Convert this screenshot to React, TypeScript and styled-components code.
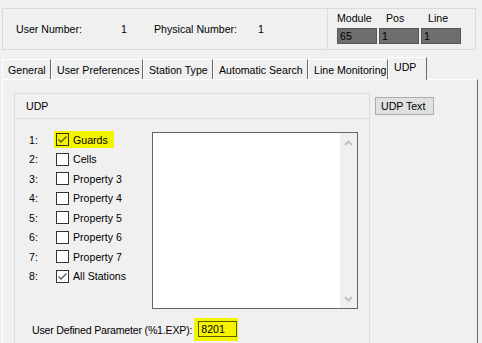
import React from 'react';
import styled, { createGlobalStyle } from 'styled-components';

const GlobalStyle = createGlobalStyle`
  html, body {
    margin: 0;
    padding: 0;
    background: #f0f0f0;
  }
  body {
    font-family: "Liberation Sans", Arial, sans-serif;
    font-size: 10.6px;
    color: #000;
  }
`;

const HIGHLIGHT = '#f4f400';

const Screen = styled.div`
  width: 482px;
  height: 343px;
  box-sizing: border-box;
  padding: 8px 0 0 2px;
  display: flex;
  flex-direction: column;
  overflow: hidden;
`;

const HeaderBar = styled.div`
  display: flex;
  height: 42px;
  flex: none;
`;

const InfoPanel = styled.div`
  width: 326px;
  box-sizing: border-box;
  border: 1px solid #dadada;
  display: flex;
  align-items: center;
  padding: 1px 0 0 13px;
`;

const InfoText = styled.span<{ $width?: number }>`
  flex: none;
  width: ${({ $width }) => ($width ? `${$width}px` : 'auto')};
  line-height: 13px;
  white-space: nowrap;
`;

const LocationPanel = styled.div`
  width: 148px;
  box-sizing: border-box;
  border: 1px solid #dadada;
  border-left: none;
  padding: 3px 0 0 9px;
  display: grid;
  grid-template-columns: repeat(3, 40px);
  grid-template-rows: 13px 16px;
  column-gap: 2px;
  row-gap: 3px;
`;

const LocationLabel = styled.span<{ $indent: number }>`
  padding-left: ${({ $indent }) => $indent}px;
  line-height: 13px;
`;

const ValueBox = styled.div`
  box-sizing: border-box;
  height: 16px;
  background: #6e6e6e;
  border: 1px solid #565656;
  padding-left: 2px;
  line-height: 14px;
`;

const TabStrip = styled.div`
  display: flex;
  align-items: flex-end;
  height: 22px;
  margin-top: 7px;
  flex: none;
`;

const Tab = styled.div<{ $width: number; $active?: boolean }>`
  position: relative;
  z-index: ${({ $active }) => ($active ? 1 : 0)};
  box-sizing: border-box;
  width: ${({ $width }) => $width}px;
  height: ${({ $active }) => ($active ? 23 : 20)}px;
  margin-bottom: ${({ $active }) => ($active ? -1 : 0)}px;
  border-top: 1px solid #fff;
  border-left: 1px solid #fff;
  border-right: 1px solid #696969;
  background: #f0f0f0;
  padding: ${({ $active }) => ($active ? '3px 0 0 5px' : '4px 0 0 5px')};
  line-height: 13px;
  white-space: nowrap;
  overflow: hidden;
`;

const TabPage = styled.div`
  flex: 1;
  width: 476px;
  box-sizing: border-box;
  border-top: 1px solid #fff;
  border-left: 1px solid #fff;
  border-right: 1px solid #696969;
  padding: 13px 0 0 11px;
  display: flex;
  align-items: flex-start;
  gap: 5px;
`;

const GroupBox = styled.div`
  width: 356px;
  height: 280px;
  box-sizing: border-box;
  border: 1px solid #dcdcdc;
  flex: none;
`;

const GroupHeader = styled.div`
  height: 24px;
  border-bottom: 1px solid #dcdcdc;
  padding-left: 11px;
  display: flex;
  align-items: center;
`;

const GroupBody = styled.div`
  display: flex;
  padding-top: 11px;
`;

const OptionList = styled.div`
  width: 123px;
  padding-left: 14px;
  display: grid;
  grid-auto-rows: 19.5px;
`;

const OptionRow = styled.div`
  display: flex;
  align-items: center;
  white-space: nowrap;
`;

const OptionNumber = styled.span`
  width: 27px;
  flex: none;
`;

const OptionBody = styled.span<{ $highlight?: boolean }>`
  display: inline-flex;
  align-items: center;
  gap: 4px;
  ${({ $highlight }) =>
    $highlight
      ? `
    background: ${HIGHLIGHT};
    margin-left: -2px;
    padding: 2px 6px 2px 2px;
  `
      : ''}
`;

const CheckBox = styled.span<{ $tint?: boolean }>`
  width: 13px;
  height: 13px;
  box-sizing: border-box;
  border: 1px solid ${({ $tint }) => ($tint ? '#333300' : '#333')};
  background: ${({ $tint }) => ($tint ? 'transparent' : '#fff')};
  display: inline-flex;
  align-items: center;
  justify-content: center;
  flex: none;
`;

const ListBox = styled.div`
  margin-top: 2px;
  width: 206px;
  height: 177px;
  box-sizing: border-box;
  border: 1px solid #646464;
  background: #fff;
  display: flex;
  justify-content: flex-end;
`;

const ScrollTrack = styled.div`
  width: 17px;
  background: #f0f0f0;
  display: flex;
  flex-direction: column;
  justify-content: space-between;
  align-items: center;
  padding: 7px 0 6px;
`;

const ParamRow = styled.div`
  display: flex;
  align-items: center;
  margin-top: 9px;
  padding-left: 17px;
`;

const ParamLabel = styled.span`
  margin-right: 2px;
  flex: none;
  white-space: nowrap;
  letter-spacing: -0.2px;
`;

const ParamHighlight = styled.span`
  background: ${HIGHLIGHT};
  padding: 3px 1px 4px 4px;
  display: inline-flex;
`;

const ParamInput = styled.span`
  width: 39px;
  height: 16px;
  box-sizing: border-box;
  border: 1px solid #5a5a00;
  padding-left: 2px;
  line-height: 14px;
`;

const SideButton = styled.div`
  margin-top: 4px;
  width: 59px;
  height: 18px;
  box-sizing: border-box;
  border: 1px solid #adadad;
  background: #e1e1e1;
  padding-left: 5px;
  line-height: 16px;
  white-space: nowrap;
`;

const Check = ({ color }: { color: string }) => (
  <svg width="11" height="11" viewBox="0 0 11 11">
    <path d="M1.5 5.5 L4 8 L9.5 2.5" fill="none" stroke={color} strokeWidth="1.3" />
  </svg>
);

const Chevron = ({ down }: { down?: boolean }) => (
  <svg width="9" height="6" viewBox="0 0 9 6">
    <path d={down ? 'M1 1 L4.5 4.5 L8 1' : 'M1 5 L4.5 1.5 L8 5'} fill="none" stroke="#c2c2c2" strokeWidth="2" />
  </svg>
);

const tabs = [
  { label: 'General', width: 49 },
  { label: 'User Preferences', width: 92 },
  { label: 'Station Type', width: 70 },
  { label: 'Automatic Search', width: 95 },
  { label: 'Line Monitoring', width: 80 },
  { label: 'UDP', width: 39, active: true },
];

const options = [
  { label: 'Guards', checked: true, highlight: true },
  { label: 'Cells' },
  { label: 'Property 3' },
  { label: 'Property 4' },
  { label: 'Property 5' },
  { label: 'Property 6' },
  { label: 'Property 7' },
  { label: 'All Stations', checked: true },
];

const location = [
  { label: 'Module', value: '65', indent: 0 },
  { label: 'Pos', value: '1', indent: 7 },
  { label: 'Line', value: '1', indent: 7 },
];

export default function App() {
  return (
    <>
      <GlobalStyle />
      <Screen>
        <HeaderBar>
          <InfoPanel>
            <InfoText $width={105}>User Number:</InfoText>
            <InfoText $width={33}>1</InfoText>
            <InfoText $width={104}>Physical Number:</InfoText>
            <InfoText>1</InfoText>
          </InfoPanel>
          <LocationPanel>
            {location.map((l) => (
              <LocationLabel key={l.label} $indent={l.indent}>
                {l.label}
              </LocationLabel>
            ))}
            {location.map((l) => (
              <ValueBox key={l.label}>{l.value}</ValueBox>
            ))}
          </LocationPanel>
        </HeaderBar>

        <TabStrip>
          {tabs.map((t) => (
            <Tab key={t.label} $width={t.width} $active={t.active}>
              {t.label}
            </Tab>
          ))}
        </TabStrip>

        <TabPage>
          <GroupBox>
            <GroupHeader>UDP</GroupHeader>
            <GroupBody>
              <OptionList>
                {options.map((o, i) => (
                  <OptionRow key={o.label}>
                    <OptionNumber>{i + 1}:</OptionNumber>
                    <OptionBody $highlight={o.highlight}>
                      <CheckBox $tint={o.highlight}>
                        {o.checked && <Check color={o.highlight ? '#555500' : '#5a5a5a'} />}
                      </CheckBox>
                      {o.label}
                    </OptionBody>
                  </OptionRow>
                ))}
              </OptionList>
              <ListBox>
                <ScrollTrack>
                  <Chevron />
                  <Chevron down />
                </ScrollTrack>
              </ListBox>
            </GroupBody>
            <ParamRow>
              <ParamLabel>User Defined Parameter (%1.EXP):</ParamLabel>
              <ParamHighlight>
                <ParamInput>8201</ParamInput>
              </ParamHighlight>
            </ParamRow>
          </GroupBox>
          <SideButton>UDP Text</SideButton>
        </TabPage>
      </Screen>
    </>
  );
}
